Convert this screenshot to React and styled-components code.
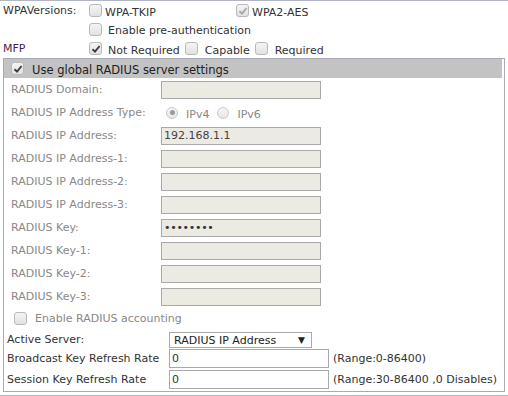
import React from "react";
import styled, { createGlobalStyle } from "styled-components";

const GlobalStyle = createGlobalStyle`
  body {
    margin: 0;
    background: #fff;
    font-family: "DejaVu Sans", Verdana, sans-serif;
    font-size: 11px;
    color: #333;
  }
`;

const Page = styled.div`
  box-sizing: border-box;
  width: 508px;
  height: 396px;
  border-top: 1px solid #b2b6c4;
  border-bottom: 1px solid #b2b6c4;
`;

const TopGrid = styled.div`
  display: grid;
  grid-template-columns: 86px auto;
  grid-auto-rows: 19px;
  align-items: center;
  padding-left: 3px;
`;

const TopLabel = styled.div`
  color: ${(p) => p.color || "#333"};
`;

const Options = styled.div`
  display: flex;
  align-items: center;
`;

const Option = styled.label`
  display: flex;
  align-items: center;
  width: ${(p) => (p.width ? `${p.width}px` : "auto")};
  gap: ${(p) => p.gap ?? 6}px;
  margin-right: ${(p) => p.mr ?? 0}px;
  color: ${(p) => (p.muted ? "#888" : "#333")};
  white-space: nowrap;
  span {
    position: relative;
    top: ${(p) => p.drop ?? 0}px;
  }
`;

const Box = styled.div`
  box-sizing: border-box;
  width: 13px;
  height: 13px;
  flex: none;
  border: 1px solid #b9b9b9;
  border-radius: 3px;
  background: linear-gradient(#f4f4f4, #e2e2e2);
  display: flex;
  align-items: center;
  justify-content: center;
`;

function Check({ checked, faded }) {
  return (
    <Box>
      {checked && (
        <svg width="10" height="10" viewBox="0 0 10 10">
          <path
            d="M1.5 5.2 L4 7.6 L8.6 2"
            fill="none"
            stroke={faded ? "#a8a8a8" : "#3c3c3c"}
            strokeWidth="1.9"
          />
        </svg>
      )}
    </Box>
  );
}

const RadioCircle = styled.div`
  box-sizing: border-box;
  width: 12px;
  height: 12px;
  flex: none;
  border: 1px solid #cacaca;
  border-radius: 50%;
  background: linear-gradient(#f6f6f6, #e6e6e6);
  display: flex;
  align-items: center;
  justify-content: center;
  &::after {
    content: "";
    display: ${(p) => (p.checked ? "block" : "none")};
    width: 5px;
    height: 5px;
    border-radius: 50%;
    background: #9a9a9a;
  }
`;

const Panel = styled.div`
  box-sizing: border-box;
  margin-left: 3px;
  width: 502px;
  height: 334px;
  border: 1px solid #a7abb9;
`;

const Header = styled.div`
  height: 19px;
  margin-right: 2px;
  background: #c3c3c3;
  display: flex;
  align-items: center;
  gap: 8px;
  padding-left: 7px;
  color: #222;
  span {
    font-size: 11.5px;
    position: relative;
    top: 1px;
  }
`;

const RadiusGrid = styled.div`
  display: grid;
  grid-template-columns: 150px auto;
  grid-auto-rows: 23px;
  align-items: center;
  padding: 0 0 0 7px;
`;

const FieldLabel = styled.div`
  color: #888;
`;

const GrayInput = styled.div`
  box-sizing: border-box;
  width: 160px;
  height: 18px;
  border: 1px solid #a9a9a9;
  background: #ebebe4;
  padding-left: 2px;
  display: flex;
  align-items: center;
  color: #444;
`;

const Dots = styled.span`
  font-size: 11px;
  letter-spacing: -0.3px;
  color: #333;
`;

const RadioRow = styled.div`
  display: flex;
  align-items: center;
  padding-left: 5px;
  color: #888;
  gap: 8px;
  span {
    position: relative;
    top: 2px;
  }
`;

const AccountingRow = styled.label`
  display: flex;
  align-items: center;
  gap: 8px;
  height: 21px;
  padding-left: 10px;
  color: #888;
`;

const LowerGrid = styled.div`
  display: grid;
  grid-template-columns: 162px auto;
  align-items: center;
  row-gap: 2px;
  padding: 3px 0 0 3px;
`;

const LowerLabel = styled.div`
  color: #333;
`;

const Select = styled.div`
  box-sizing: border-box;
  width: 143px;
  height: 16px;
  border: 1px solid #a9a9a9;
  background: #fff;
  padding: 0 6px 0 4px;
  display: flex;
  align-items: center;
  justify-content: space-between;
  color: #222;
  margin-bottom: -1px;
  i {
    font-style: normal;
    font-size: 9px;
  }
`;

const InputLine = styled.div`
  display: flex;
  align-items: center;
  gap: 4px;
`;

const WhiteInput = styled.div`
  box-sizing: border-box;
  width: 160px;
  height: 19px;
  border: 1px solid #a9a9a9;
  background: #fff;
  padding-left: 2px;
  display: flex;
  align-items: center;
  color: #333;
`;

const radiusFields = [
  { label: "RADIUS Domain:" },
  { label: "RADIUS IP Address Type:", radio: true },
  { label: "RADIUS IP Address:", value: "192.168.1.1" },
  { label: "RADIUS IP Address-1:" },
  { label: "RADIUS IP Address-2:" },
  { label: "RADIUS IP Address-3:" },
  { label: "RADIUS Key:", secret: true },
  { label: "RADIUS Key-1:" },
  { label: "RADIUS Key-2:" },
  { label: "RADIUS Key-3:" },
];

export default function App() {
  return (
    <>
      <GlobalStyle />
      <Page>
        <TopGrid>
          <TopLabel>WPAVersions:</TopLabel>
          <Options>
            <Option width={147} gap={3} drop={2}>
              <Check />
              <span>WPA-TKIP</span>
            </Option>
            <Option gap={3} drop={2}>
              <Check checked faded />
              <span>WPA2-AES</span>
            </Option>
          </Options>
          <div />
          <Options>
            <Option gap={6} drop={1}>
              <Check />
              <span>Enable pre-authentication</span>
            </Option>
          </Options>
          <TopLabel color="#4a1f4f">MFP</TopLabel>
          <Options>
            <Option gap={6} mr={5} drop={2}>
              <Check checked />
              <span>Not Required</span>
            </Option>
            <Option gap={7} mr={5} drop={2}>
              <Check />
              <span>Capable</span>
            </Option>
            <Option gap={7} drop={2}>
              <Check />
              <span>Required</span>
            </Option>
          </Options>
        </TopGrid>

        <Panel>
          <Header>
            <Check checked />
            <span>Use global RADIUS server settings</span>
          </Header>

          <RadiusGrid>
            {radiusFields.map((f) => (
              <React.Fragment key={f.label}>
                <FieldLabel>{f.label}</FieldLabel>
                {f.radio ? (
                  <RadioRow>
                    <RadioCircle checked />
                    <span>IPv4</span>
                    <RadioCircle />
                    <span>IPv6</span>
                  </RadioRow>
                ) : (
                  <GrayInput>
                    {f.value}
                    {f.secret && <Dots>••••••••</Dots>}
                  </GrayInput>
                )}
              </React.Fragment>
            ))}
          </RadiusGrid>

          <AccountingRow>
            <Check />
            <span>Enable RADIUS accounting</span>
          </AccountingRow>

          <LowerGrid>
            <LowerLabel>Active Server:</LowerLabel>
            <Select>
              <span>RADIUS IP Address</span>
              <i>▼</i>
            </Select>
            <LowerLabel>Broadcast Key Refresh Rate</LowerLabel>
            <InputLine>
              <WhiteInput>0</WhiteInput>
              <span>(Range:0-86400)</span>
            </InputLine>
            <LowerLabel>Session Key Refresh Rate</LowerLabel>
            <InputLine>
              <WhiteInput>0</WhiteInput>
              <span>(Range:30-86400 ,0 Disables)</span>
            </InputLine>
          </LowerGrid>
        </Panel>
      </Page>
    </>
  );
}
